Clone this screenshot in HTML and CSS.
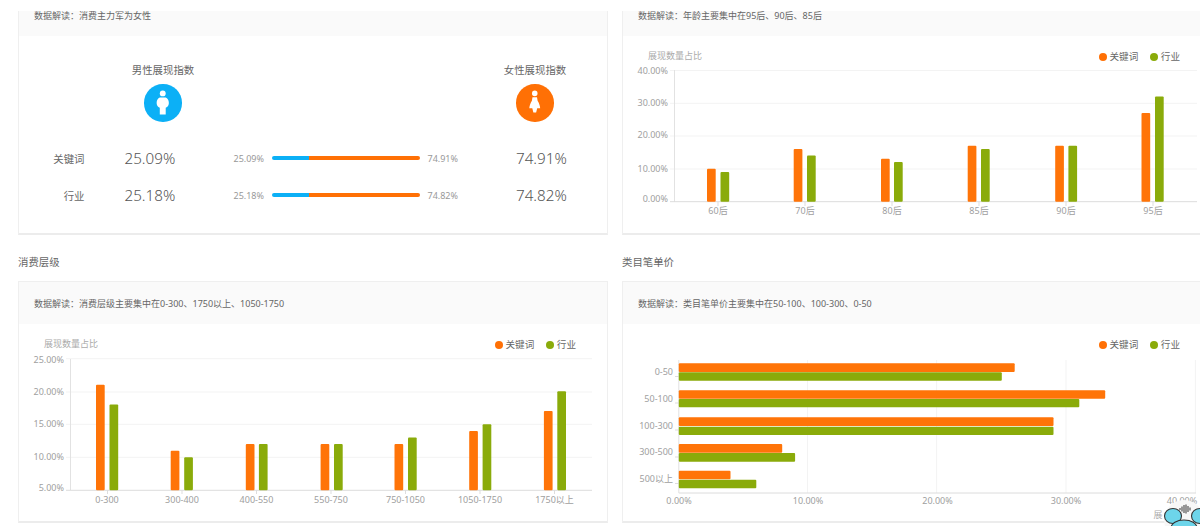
FILE: index.html
```html
<!DOCTYPE html>
<html lang="zh-CN">
<head>
<meta charset="utf-8">
<title>数据解读</title>
<link rel="stylesheet" href="styles.css">
</head>
<body>
<div class="page">
  <div class="grid">
    <section class="panel">
      <div class="card">
        <div class="note">数据解读：消费主力军为女性</div>
        <div class="index-head">
          <div class="index">
            <div class="index-title">男性展现指数</div>
            <div class="badge badge-male">
              <svg viewBox="0 0 38 38" class="badge-icon"><circle cx="19" cy="9.500" r="3"/><path d="M16 13.800h6c1.900.9 3.200 3 3.200 5.400 0 2.300-1.200 4-3.200 4.800V31h-6v-7c-2-.8-3.200-2.500-3.200-4.800 0-2.400 1.300-4.500 3.200-5.400z"/></svg>
            </div>
          </div>
          <div class="index">
            <div class="index-title">女性展现指数</div>
            <div class="badge badge-female">
              <svg viewBox="0 0 38 38" class="badge-icon"><circle cx="19" cy="9.500" r="2.800"/><path d="M16.700 13.500h4.600l.6 3.500c1.500 2.500 2.400 5 2.600 7.500h-3L20.400 29h-2.800l-1.100-4.500h-3c.2-2.500 1.100-5 2.600-7.500z"/></svg>
            </div>
          </div>
        </div>
        <div class="ratio">
          <div class="ratio-label">关键词</div>
          <div class="ratio-big">25.09%</div>
          <div class="ratio-small">25.09%</div>
          <div class="ratio-bar"><span class="seg-male" style="width:25.09%"></span><span class="seg-female"></span></div>
          <div class="ratio-small ratio-small-r">74.91%</div>
          <div class="ratio-big ratio-big-r">74.91%</div>
        </div>
        <div class="ratio">
          <div class="ratio-label">行业</div>
          <div class="ratio-big">25.18%</div>
          <div class="ratio-small">25.18%</div>
          <div class="ratio-bar"><span class="seg-male" style="width:25.18%"></span><span class="seg-female"></span></div>
          <div class="ratio-small ratio-small-r">74.82%</div>
          <div class="ratio-big ratio-big-r">74.82%</div>
        </div>
      </div>
    </section>

    <section class="panel">
      <div class="card">
        <div class="note">数据解读：年龄主要集中在95后、90后、85后</div>
        <div class="chart-head chart-head-wide">
          <div class="chart-unit">展现数量占比</div>
          <div class="legend"><span class="dot dot-o"></span><span class="legend-text legend-first">关键词</span><span class="dot dot-g"></span><span class="legend-text">行业</span></div>
        </div>
        <svg class="chart" width="577" height="167" viewBox="623 67 577 167">
          <g class="grid-lines">
            <line x1="670" x2="1197" y1="70.500" y2="70.500"/><line x1="670" x2="1197" y1="103.300" y2="103.300"/><line x1="670" x2="1197" y1="136" y2="136"/><line x1="670" x2="1197" y1="169" y2="169"/>
          </g>
          <line class="axis-y" x1="674.500" x2="674.500" y1="70" y2="202"/>
          <line class="axis-x" x1="670" x2="1197" y1="201.700" y2="201.700"/>
          <g class="ticks"><line x1="718" x2="718" y1="202" y2="206"/><line x1="805" x2="805" y1="202" y2="206"/><line x1="892" x2="892" y1="202" y2="206"/><line x1="979" x2="979" y1="202" y2="206"/><line x1="1066" x2="1066" y1="202" y2="206"/><line x1="1153" x2="1153" y1="202" y2="206"/></g>
          <g class="ylab">
            <text x="668" y="74">40.00%</text><text x="668" y="106">30.00%</text><text x="668" y="138">20.00%</text><text x="668" y="172">10.00%</text><text x="668" y="202">0.00%</text>
          </g>
          <g class="xlab">
            <text x="718" y="214">60后</text><text x="805" y="214">70后</text><text x="892" y="214">80后</text><text x="979" y="214">85后</text><text x="1066" y="214">90后</text><text x="1153" y="214">95后</text>
          </g>
          <g class="o">
            <rect x="707" y="168.700" width="8.700" height="33" rx="1"/><rect x="793.700" y="149" width="8.700" height="52.700" rx="1"/><rect x="881" y="158.800" width="8.700" height="42.900" rx="1"/><rect x="967.700" y="145.700" width="8.700" height="56" rx="1"/><rect x="1055.200" y="145.700" width="8.700" height="56" rx="1"/><rect x="1141.500" y="112.900" width="8.700" height="88.800" rx="1"/>
          </g>
          <g class="g">
            <rect x="720.500" y="172" width="8.700" height="29.700" rx="1"/><rect x="807" y="155.500" width="8.700" height="46.200" rx="1"/><rect x="894" y="162" width="8.700" height="39.700" rx="1"/><rect x="981" y="149" width="8.700" height="52.700" rx="1"/><rect x="1068.400" y="145.700" width="8.700" height="56" rx="1"/><rect x="1155" y="96.500" width="8.700" height="105.200" rx="1"/>
          </g>
        </svg>
      </div>
    </section>

    <section class="panel">
      <h2 class="section-title">消费层级</h2>
      <div class="card">
        <div class="note">数据解读：消费层级主要集中在0-300、1750以上、1050-1750</div>
        <div class="chart-head chart-head-left">
          <div class="chart-unit">展现数量占比</div>
          <div class="legend"><span class="dot dot-o"></span><span class="legend-text legend-first">关键词</span><span class="dot dot-g"></span><span class="legend-text">行业</span></div>
        </div>
        <svg class="chart" width="587" height="167" viewBox="19 355 587 167">
          <g class="grid-lines">
            <line x1="66" x2="592" y1="358.700" y2="358.700"/><line x1="66" x2="592" y1="392" y2="392"/><line x1="66" x2="592" y1="424.300" y2="424.300"/><line x1="66" x2="592" y1="457.300" y2="457.300"/>
          </g>
          <line class="axis-y" x1="70.500" x2="70.500" y1="359" y2="490"/>
          <line class="axis-x" x1="66" x2="592" y1="490.300" y2="490.300"/>
          <g class="ticks"><line x1="107.500" x2="107.500" y1="490" y2="494"/><line x1="182" x2="182" y1="490" y2="494"/><line x1="256.500" x2="256.500" y1="490" y2="494"/><line x1="331" x2="331" y1="490" y2="494"/><line x1="405.500" x2="405.500" y1="490" y2="494"/><line x1="480" x2="480" y1="490" y2="494"/><line x1="554.500" x2="554.500" y1="490" y2="494"/></g>
          <g class="ylab">
            <text x="64" y="363">25.00%</text><text x="64" y="395">20.00%</text><text x="64" y="427">15.00%</text><text x="64" y="460">10.00%</text><text x="64" y="491">5.00%</text>
          </g>
          <g class="xlab">
            <text x="107" y="503">0-300</text><text x="182" y="503">300-400</text><text x="256.500" y="503">400-550</text><text x="331" y="503">550-750</text><text x="405.500" y="503">750-1050</text><text x="480" y="503">1050-1750</text><text x="554.500" y="503">1750以上</text>
          </g>
          <g class="o">
            <rect x="96" y="384.700" width="8.700" height="105.600" rx="1"/><rect x="170.700" y="450.700" width="8.700" height="39.600" rx="1"/><rect x="245.800" y="444.100" width="8.700" height="46.200" rx="1"/><rect x="320.600" y="444.100" width="8.700" height="46.200" rx="1"/><rect x="394.500" y="444.100" width="8.700" height="46.200" rx="1"/><rect x="469.200" y="430.900" width="8.700" height="59.400" rx="1"/><rect x="543.900" y="411.100" width="8.700" height="79.200" rx="1"/>
          </g>
          <g class="g">
            <rect x="109.500" y="404.500" width="8.700" height="85.800" rx="1"/><rect x="184.200" y="457.300" width="8.700" height="33" rx="1"/><rect x="258.900" y="444.100" width="8.700" height="46.200" rx="1"/><rect x="334" y="444.100" width="8.700" height="46.200" rx="1"/><rect x="408" y="437.500" width="8.700" height="52.800" rx="1"/><rect x="482.600" y="424.300" width="8.700" height="66" rx="1"/><rect x="557.300" y="391.300" width="8.700" height="99" rx="1"/>
          </g>
        </svg>
      </div>
    </section>

    <section class="panel">
      <h2 class="section-title">类目笔单价</h2>
      <div class="card">
        <div class="note">数据解读：类目笔单价主要集中在50-100、100-300、0-50</div>
        <div class="chart-head chart-head-wide">
          <div class="chart-unit"></div>
          <div class="legend"><span class="dot dot-o"></span><span class="legend-text legend-first">关键词</span><span class="dot dot-g"></span><span class="legend-text">行业</span></div>
        </div>
        <svg class="chart" width="577" height="167" viewBox="623 355 577 167">
          <g class="grid-lines">
            <line x1="807.500" x2="807.500" y1="360" y2="493"/><line x1="936.600" x2="936.600" y1="360" y2="493"/><line x1="1066" x2="1066" y1="360" y2="493"/><line x1="1195.400" x2="1195.400" y1="360" y2="493"/>
          </g>
          <line class="axis-y" x1="678.800" x2="678.800" y1="360" y2="493"/>
          <line class="axis-x" x1="678.800" x2="1196" y1="493" y2="493"/>
          <g class="ticks"><line x1="675" x2="678.800" y1="376.500" y2="376.500"/><line x1="675" x2="678.800" y1="403" y2="403"/><line x1="675" x2="678.800" y1="430" y2="430"/><line x1="675" x2="678.800" y1="457" y2="457"/><line x1="675" x2="678.800" y1="483.500" y2="483.500"/></g>
          <g class="ylab">
            <text x="673" y="375">0-50</text><text x="673" y="401.500">50-100</text><text x="673" y="428.500">100-300</text><text x="673" y="455">300-500</text><text x="673" y="481.500">500以上</text>
          </g>
          <g class="xlab">
            <text x="679" y="504">0.00%</text><text x="808" y="504">10.00%</text><text x="937.500" y="504">20.00%</text><text x="1066" y="504">30.00%</text><text x="1182" y="504">40.00%</text>
          </g>
          <g class="o">
            <rect x="678.800" y="363.300" width="335.900" height="8.700" rx="1"/><rect x="678.800" y="390.300" width="426.400" height="8.400" rx="1"/><rect x="678.800" y="417.300" width="374.700" height="8.700" rx="1"/><rect x="678.800" y="444" width="103.400" height="8.700" rx="1"/><rect x="678.800" y="470.700" width="51.700" height="8.600" rx="1"/>
          </g>
          <g class="g">
            <rect x="678.800" y="372.300" width="323" height="8.400" rx="1"/><rect x="678.800" y="399" width="400.500" height="8.300" rx="1"/><rect x="678.800" y="426.700" width="374.700" height="8.300" rx="1"/><rect x="678.800" y="453" width="116.300" height="8.700" rx="1"/><rect x="678.800" y="479.700" width="77.500" height="8.600" rx="1"/>
          </g>
        </svg>
      </div>
    </section>
  </div>

  <div class="top-mask"></div>
  <div class="helper">
    <span class="helper-text">展</span>
    <svg class="helper-art" width="50" height="36" viewBox="0 0 50 36">
      <circle cx="34" cy="30" r="20" fill="#f7f7f7"/>
      <ellipse cx="23" cy="26" rx="8.500" ry="7.500" fill="#6dd5ea" stroke="#333" stroke-width="1.100"/>
      <ellipse cx="50" cy="26" rx="8.500" ry="7.500" fill="#6dd5ea" stroke="#333" stroke-width="1.100"/>
      <ellipse cx="34" cy="38" rx="13" ry="8" fill="#6dd5ea" stroke="#333" stroke-width="1.100"/>
      <path d="M30 18v2M32 16.500v5M34 15v8M36 14.500v9M38 16v6M40 17.500v3" stroke="#555" stroke-width="1.200" fill="none"/>
    </svg>
  </div>
</div>
</body>
</html>
```
FILE: styles.css
```css
* { box-sizing: border-box; }
html, body { margin: 0; padding: 0; background: #fff; }
body {
  font-family: "Noto Sans", "Noto Sans CJK SC", sans-serif;
  color: #666;
}
.page {
  position: relative;
  width: 1200px;
  height: 526px;
  overflow: hidden;
  background: #fff;
}
.grid {
  display: grid;
  grid-template-columns: 590px 600px;
  column-gap: 14px;
  margin-top: -7px;
  padding-left: 18px;
  width: 1222px;
}
.section-title {
  margin: 0;
  height: 46px;
  padding-top: 17px;
  font-size: 10.400px;
  line-height: 20px;
  font-weight: 400;
  color: #666;
}
.card {
  height: 242px;
  border: 1px solid #efefef;
  border-bottom: 2px solid #ececec;
  background: #fff;
}
.note {
  height: 42px;
  padding-left: 15px;
  background: #fafafa;
  font-size: 9px;
  line-height: 43px;
  color: #666;
}
.index-head {
  display: flex;
  justify-content: space-between;
  padding: 24px 32px 0 104px;
}
.index { width: 80px; }
.index-title {
  font-size: 10.400px;
  line-height: 20px;
  text-align: center;
  color: #666;
}
.badge {
  width: 37.500px;
  height: 37.500px;
  margin: 4px auto 0;
  border-radius: 50%;
}
.badge-male { background: #0cb0f6; }
.badge-female { background: #ff7005; }
.badge-icon { display: block; width: 100%; height: 100%; fill: #fff; }
.ratio {
  display: flex;
  align-items: center;
  height: 37px;
}
.index-head + .ratio { margin-top: 18px; }
.ratio-label {
  width: 65.500px;
  margin-right: 40px;
  text-align: right;
  font-size: 10.400px;
  color: #666;
}
.ratio-big {
  width: 109px;
  font-size: 15.200px;
  font-weight: 300;
  color: #555;
}
.ratio-big-r { width: 60px; }
.ratio-small {
  width: 38.500px;
  font-size: 9px;
  color: #999;
}
.ratio-small-r { width: 96px; padding-left: 7.500px; }
.ratio-bar {
  display: flex;
  width: 148px;
  height: 4.600px;
  border-radius: 3px;
  overflow: hidden;
}
.seg-male { background: #0cb0f6; }
.seg-female { flex: 1; background: #ff7005; }
.chart-head {
  display: flex;
  justify-content: space-between;
  height: 31px;
  padding-top: 10px;
  line-height: 20px;
  font-size: 9px;
}
.chart-head-wide { padding-left: 25px; padding-right: 41px; }
.chart-head-left { padding-left: 25px; padding-right: 31px; }
.chart-unit { color: #aaa; }
.legend {
  display: flex;
  align-items: center;
  height: 20px;
  margin-top: 1px;
  font-size: 9.600px;
  color: #666;
}
.dot {
  width: 8px;
  height: 8px;
  margin-right: 2.500px;
  border-radius: 50%;
}
.dot-o { background: #ff7005; }
.dot-g { background: #8aab0a; }
.legend-first { margin-right: 12px; }
.chart { display: block; overflow: visible; }
.grid-lines line { stroke: #f3f3f3; stroke-width: 1; }
.axis-y { stroke: #e2e2e2; stroke-width: 1; }
.axis-x { stroke: #dcdcdc; stroke-width: 1; }
.ticks line { stroke: #ddd; stroke-width: 1; }
.ylab text, .xlab text { font-size: 9px; fill: #a0a0a0; }
.ylab text { text-anchor: end; }
.xlab text { text-anchor: middle; }
.o rect { fill: #ff7408; }
.g rect { fill: #8aab0a; }
.top-mask {
  position: absolute;
  top: 0;
  left: 0;
  width: 100%;
  height: 11px;
  background: #fff;
}
.helper {
  position: absolute;
  right: 0;
  bottom: 0;
  width: 50px;
  height: 36px;
}
.helper-art { display: block; }
.helper-text {
  position: absolute;
  left: 3.500px;
  top: 19px;
  font-size: 9px;
  line-height: 12px;
  color: #aaa;
}
```
